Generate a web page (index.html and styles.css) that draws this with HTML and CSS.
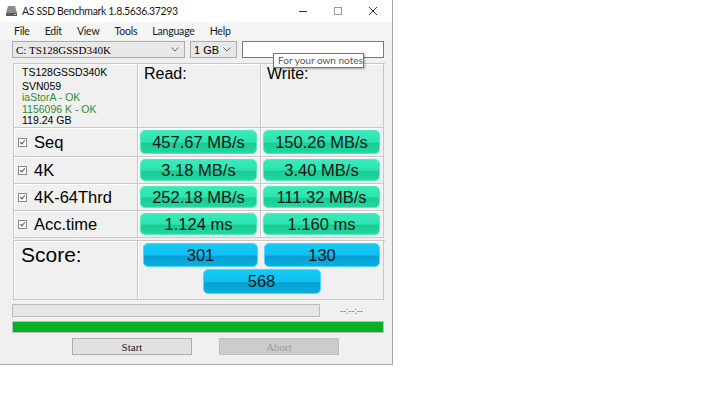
FILE: index.html
```html
<!DOCTYPE html>
<html lang="en">
<head>
    <meta charset="UTF-8">
    <title>AS SSD Benchmark 1.8.5636.37293</title>
    <link rel="stylesheet" href="styles.css">
</head>
<body>
    <div class="window">
        <div class="titlebar">
            <svg class="app-icon" width="13" height="12" viewBox="0 0 13 12">
                <path d="M3 1 H10 L12 8 H1 Z" fill="#8c8c8c"/>
                <rect x="1" y="8" width="11" height="3" fill="#5a5a5a"/>
                <rect x="9" y="9" width="2" height="1" fill="#c8c8c8"/>
            </svg>
            <span class="title">AS SSD Benchmark 1.8.5636.37293</span>
            <div class="controls">
                <span class="ctl"><svg width="10" height="10" viewBox="0 0 10 10"><path d="M1 5.5 H9" stroke="#333" stroke-width="1"/></svg></span>
                <span class="ctl"><svg width="10" height="10" viewBox="0 0 10 10"><rect x="1.5" y="1.5" width="7" height="7" fill="none" stroke="#999" stroke-width="1"/></svg></span>
                <span class="ctl"><svg width="10" height="10" viewBox="0 0 10 10"><path d="M1 1 L9 9 M9 1 L1 9" stroke="#333" stroke-width="1"/></svg></span>
            </div>
        </div>

        <div class="menubar">
            <span>File</span>
            <span>Edit</span>
            <span>View</span>
            <span>Tools</span>
            <span>Language</span>
            <span>Help</span>
        </div>

        <div class="toolbar">
            <div class="combo drive">
                <span>C: TS128GSSD340K</span>
                <svg width="8" height="5" viewBox="0 0 8 5"><path d="M0.5 0.5 L4 4 L7.5 0.5" fill="none" stroke="#666"/></svg>
            </div>
            <div class="combo size">
                <span>1 GB</span>
                <svg width="8" height="5" viewBox="0 0 8 5"><path d="M0.5 0.5 L4 4 L7.5 0.5" fill="none" stroke="#666"/></svg>
            </div>
            <div class="notes"></div>
        </div>
        <div class="tooltip">For your own notes</div>

        <div class="results">
            <div class="cell info">
                <div class="model">TS128GSSD340K</div>
                <div>SVN059</div>
                <div class="ok">iaStorA - OK</div>
                <div class="ok">1156096 K - OK</div>
                <div>119.24 GB</div>
            </div>
            <div class="cell head">Read:</div>
            <div class="cell head">Write:</div>

            <div class="cell label"><span class="check"></span>Seq</div>
            <div class="cell"><div class="bar">457.67 MB/s</div></div>
            <div class="cell"><div class="bar">150.26 MB/s</div></div>

            <div class="cell label"><span class="check"></span>4K</div>
            <div class="cell"><div class="bar">3.18 MB/s</div></div>
            <div class="cell"><div class="bar">3.40 MB/s</div></div>

            <div class="cell label"><span class="check"></span>4K-64Thrd</div>
            <div class="cell"><div class="bar">252.18 MB/s</div></div>
            <div class="cell"><div class="bar">111.32 MB/s</div></div>

            <div class="cell label"><span class="check"></span>Acc.time</div>
            <div class="cell"><div class="bar">1.124 ms</div></div>
            <div class="cell"><div class="bar">1.160 ms</div></div>
        </div>

        <div class="score">
            <div class="cell score-label">Score:</div>
            <div class="cell score-bars">
                <div class="sbar">301</div>
                <div class="sbar">130</div>
                <div class="sbar total">568</div>
            </div>
        </div>

        <div class="progress-row">
            <div class="progress"></div>
            <span class="time">--:--:--</span>
        </div>
        <div class="total-progress"></div>

        <div class="buttons">
            <div class="btn">Start</div>
            <div class="btn disabled">Abort</div>
        </div>
    </div>
</body>
</html>
```

FILE: styles.css
```css
body {
    margin: 0;
    padding: 0;
    background-color: #ffffff;
    font-family: "Liberation Sans", Arial, sans-serif;
    color: #000000;
}
.window {
    position: relative;
    width: 393px;
    height: 365px;
    box-sizing: border-box;
    background-color: #f0f0f0;
    border-right: 1px solid #a8a8a8;
    border-bottom: 1px solid #a8a8a8;
}
.titlebar {
    height: 22px;
    display: flex;
    align-items: center;
    background-color: #ffffff;
    padding-left: 5px;
}
.app-icon {
    margin-right: 4px;
}
.title {
    font-family: Lato, sans-serif;
    font-size: 10.5px;
    letter-spacing: -0.35px;
    color: #1a1a1a;
}
.controls {
    margin-left: auto;
    display: flex;
    padding-right: 2px;
}
.ctl {
    width: 35px;
    height: 22px;
    display: flex;
    justify-content: center;
    align-items: center;
}
.menubar {
    height: 18px;
    display: flex;
    align-items: center;
    gap: 15px;
    padding-left: 14px;
    font-family: Lato, sans-serif;
    font-size: 10.5px;
    letter-spacing: -0.2px;
    color: #1a1a1a;
    background-color: #f5f5f5;
}
.toolbar {
    display: flex;
    gap: 5px;
    height: 17px;
    margin-top: 1px;
    padding-left: 12px;
}
.combo {
    box-sizing: border-box;
    height: 17px;
    display: flex;
    align-items: center;
    justify-content: space-between;
    padding: 0 5px 0 3px;
    background-color: #e8e8e8;
    border: 1px solid #adadad;
    font-size: 11px;
}
.drive {
    width: 173px;
    font-family: "Liberation Serif", serif;
}
.size {
    width: 47px;
}
.notes {
    width: 142px;
    height: 17px;
    box-sizing: border-box;
    background-color: #ffffff;
    border: 1px solid #7a7a7a;
}
.tooltip {
    position: absolute;
    z-index: 2;
    left: 273px;
    top: 53px;
    width: 91px;
    height: 15px;
    box-sizing: border-box;
    padding-left: 4px;
    background-color: #ffffff;
    border: 1px solid #767676;
    box-shadow: 1px 1px 2px rgba(0, 0, 0, 0.3);
    font-family: Lato, sans-serif;
    font-size: 10px;
    line-height: 13px;
    white-space: nowrap;
    color: #575757;
}
.results {
    display: grid;
    grid-template-columns: 124px 123px 123px;
    grid-template-rows: 64px 29px 27px 27px 27px;
    width: 371px;
    margin: 5px 0 0 13px;
    border-top: 1px solid #c8c8c8;
    border-left: 1px solid #c8c8c8;
}
.cell {
    box-sizing: border-box;
    border-right: 1px solid #c8c8c8;
    border-bottom: 1px solid #c8c8c8;
    box-shadow: inset 1px 1px 0 #ffffff;
}
.info {
    padding: 3px 0 0 8px;
    font-size: 10.5px;
    line-height: 11.5px;
}
.info .model {
    font-size: 10.5px;
    margin-bottom: 2px;
}
.ok {
    color: #2f8f2f;
}
.head {
    font-size: 16px;
    padding: 1px 0 0 6px;
}
.label {
    display: flex;
    align-items: center;
    font-size: 16.5px;
    padding-left: 4px;
}
.check {
    width: 9px;
    height: 9px;
    box-sizing: border-box;
    border: 1px solid #8a8a8a;
    background-color: #ffffff;
    margin-right: 7px;
    position: relative;
}
.check::after {
    content: "";
    position: absolute;
    left: 2px;
    top: 0px;
    width: 2px;
    height: 4px;
    border-right: 1px solid #555;
    border-bottom: 1px solid #555;
    transform: rotate(40deg);
}
.results .cell:not(.info):not(.head):not(.label) {
    padding: 2px 3px 2px 2px;
}
.bar {
    height: 100%;
    box-sizing: border-box;
    display: flex;
    justify-content: center;
    align-items: center;
    border-radius: 5px;
    border: 1px solid #55eac2;
    background: linear-gradient(#36ecbb 0%, #2de3b0 50%, #1bcb95 56%, #20d8a0 100%);
    font-size: 16.5px;
    color: #141414;
}
.score {
    display: grid;
    grid-template-columns: 124px 246px;
    grid-template-rows: 59px;
    width: 371px;
    margin: 2px 0 0 13px;
    border-top: 1px solid #c8c8c8;
    border-left: 1px solid #c8c8c8;
}
.score-label {
    font-size: 21px;
    padding: 2px 0 0 7px;
}
.score-bars {
    display: grid;
    grid-template-columns: 115px 116px;
    grid-template-rows: 24px 25px;
    column-gap: 6px;
    row-gap: 2px;
    padding: 2px 0 0 5px;
}
.sbar {
    display: flex;
    justify-content: center;
    align-items: center;
    border-radius: 5px;
    border: 1px solid #4fd6fb;
    background: linear-gradient(#16c9f7 0%, #10c0f0 50%, #069fd3 56%, #0aaee0 100%);
    font-size: 16.5px;
    color: #141414;
}
.sbar.total {
    grid-column: 1 / 3;
    width: 116px;
    justify-self: center;
}
.progress-row {
    display: flex;
    align-items: center;
    margin: 4px 0 0 12px;
    height: 13px;
}
.progress {
    width: 308px;
    height: 13px;
    box-sizing: border-box;
    background-color: #e6e6e6;
    border: 1px solid #bcbcbc;
}
.time {
    margin-left: 20px;
    font-size: 9px;
    color: #6a6a6a;
}
.total-progress {
    width: 372px;
    height: 12px;
    box-sizing: border-box;
    margin: 4px 0 0 12px;
    background-color: #06b025;
    border: 1px solid #bcbcbc;
}
.buttons {
    display: flex;
    gap: 27px;
    margin: 5px 0 0 72px;
}
.btn {
    width: 120px;
    height: 17px;
    box-sizing: border-box;
    display: flex;
    justify-content: center;
    align-items: center;
    background-color: #e1e1e1;
    border: 1px solid #adadad;
    font-family: "Liberation Serif", serif;
    font-size: 11px;
    color: #1a1a1a;
}
.btn.disabled {
    background-color: #cccccc;
    border-color: #bfbfbf;
    color: #9a9a9a;
}
```
